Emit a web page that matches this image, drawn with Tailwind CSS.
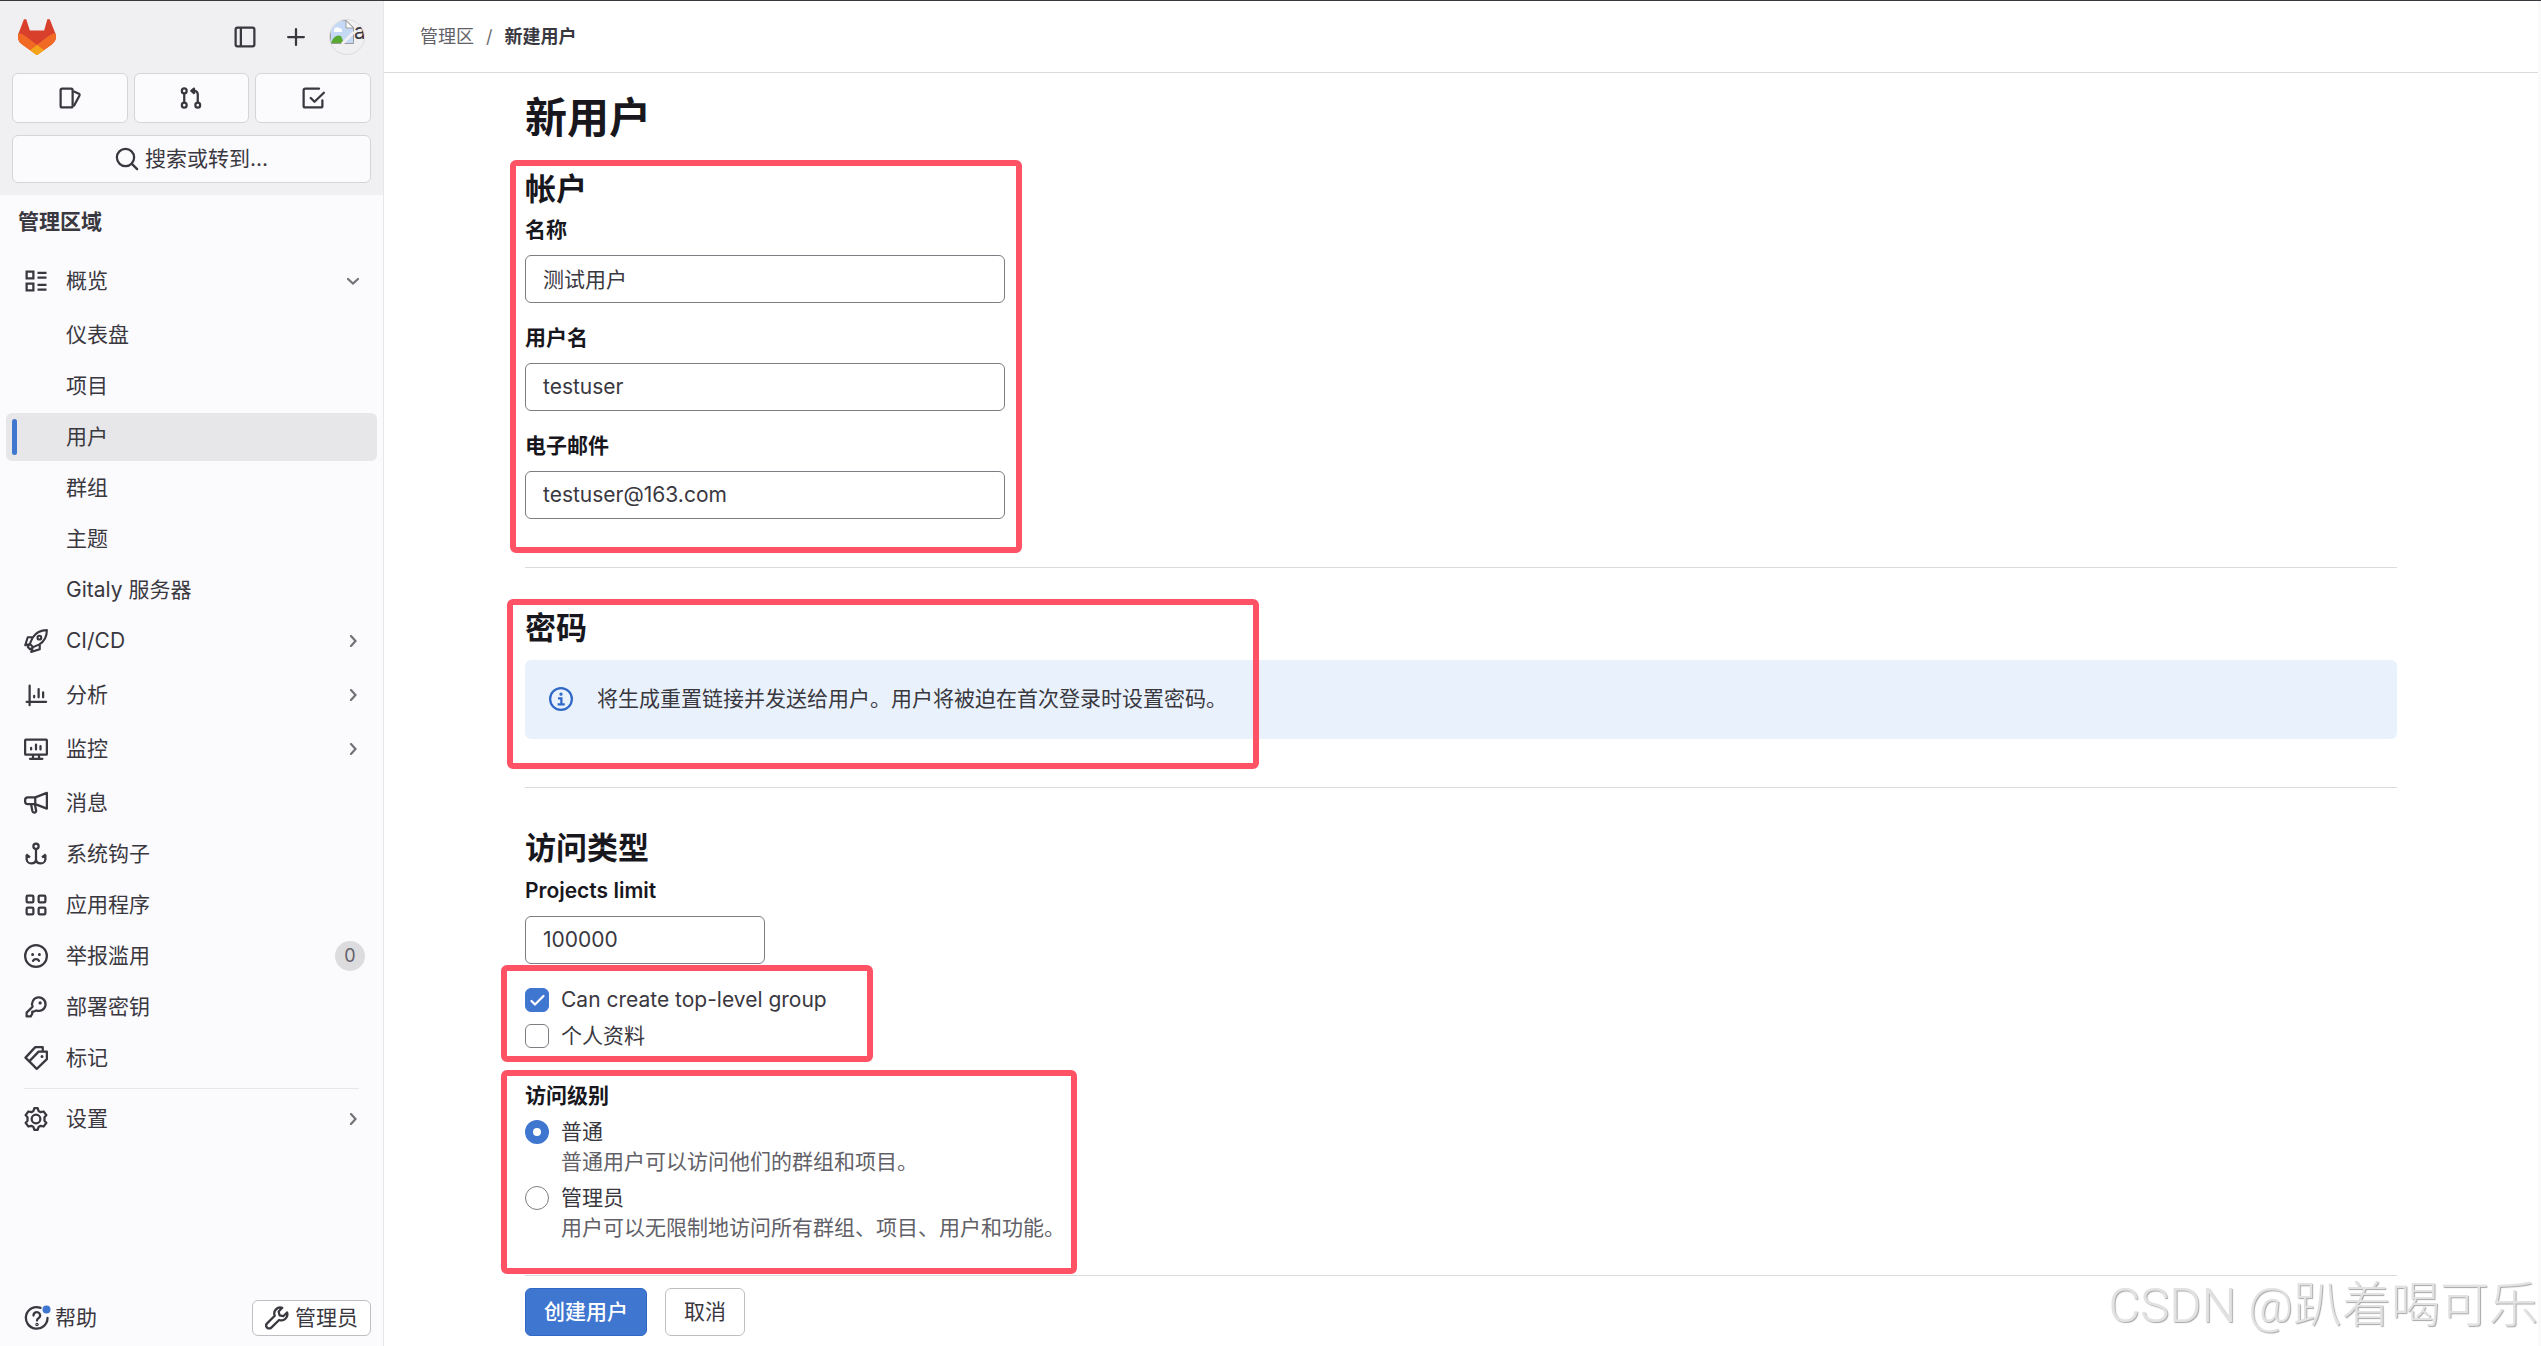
<!DOCTYPE html>
<html lang="zh-CN">
<head>
    <meta charset="UTF-8">
    <meta name="viewport" content="width=device-width, initial-scale=1.0">
    <title>新建用户 · 管理区 · GitLab</title>
    <script src="https://cdn.jsdelivr.net/npm/@tailwindcss/browser@4"></script>
</head>
<body class="min-h-screen flex border-t border-[#3a383f] bg-white font-['Inter','Noto_Sans_CJK_SC',sans-serif] text-[21px] leading-[30px] text-[#3a383f]">

    <!-- Sidebar -->
    <aside class="w-96 shrink-0 flex flex-col border-r border-[#e7e7ea] bg-[#fbfafd]">
        <div class="bg-[#f0eff2] px-3 pb-3 h-[194px]">
            <div class="flex items-center h-[72px] px-[6px]">
                <a href="#" aria-label="主页">
                    <svg class="w-[38px] h-9" viewBox="0 0 25 24" preserveAspectRatio="none">
                        <path fill="#d9402b" d="M24.507 9.500l-.034-.09L20.900.1h-1.600l-2.100 7.560H7.800L5.400.1H3.900L.451 9.411.416 9.500a6.297 6.297 0 002.090 7.278l.042.032 9.900 7.200 9.970-7.200A6.297 6.297 0 0024.507 9.500z"/>
                        <path fill="#f06a25" d="M24.507 9.5l-.034-.09a11.44 11.44 0 00-4.56 2.051l-7.447 5.632 4.742 3.584 5.197-3.89.014-.01A6.297 6.297 0 0024.507 9.5z"/>
                        <path fill="#f5a31a" d="M7.707 20.677l2.56 1.935 1.555 1.176a1.051 1.051 0 001.268 0l1.555-1.176 2.56-1.935-4.743-3.584-4.755 3.584z"/>
                        <path fill="#f06a25" d="M5.01 11.461a11.43 11.43 0 00-4.56-2.05L.416 9.5a6.297 6.297 0 002.09 7.278l.012.01.03.022 5.16 3.867 4.745-3.584-7.444-5.632z"/>
                    </svg>
                </a>
                <div class="ml-auto flex items-center">
                    <button type="button" aria-label="切换侧边栏" class="w-12 h-12 flex items-center justify-center">
                        <svg class="w-6 h-6" viewBox="0 0 16 16" fill="none" stroke="currentColor" stroke-width="1.5"><rect x="1.75" y="1.75" width="12.5" height="12.5" rx="1.25"/><path d="M5.25 2v12"/></svg>
                    </button>
                    <button type="button" aria-label="新建" class="w-[54px] h-12 flex items-center justify-center">
                        <svg class="w-6 h-6" viewBox="0 0 16 16" fill="none" stroke="currentColor" stroke-width="1.5" stroke-linecap="round"><path d="M8 2.75v10.5M2.75 8h10.5"/></svg>
                    </button>
                    <button type="button" aria-label="用户菜单" class="ml-[6px] w-9 h-9 rounded-full overflow-hidden border border-[#dcdcde] flex items-start">
                        <svg class="w-6 h-6 shrink-0" viewBox="0 0 24 24">
                            <path fill="#c5d9f7" stroke="#9a9a9a" d="M.5.5H16l7.500 7V23.500H.5z"/>
                            <path fill="#fff" d="M4 10a3 3 0 015-2 3 3 0 013 4H4z"/>
                            <path fill="#58a832" d="M1 23c2-6 6-9 10-7l3 7z"/>
                            <path fill="#fff" stroke="#9a9a9a" d="M16 .5V8h7.500z"/>
                            <path stroke="#f0eff2" stroke-width="3" d="M12 24L24 12"/>
                        </svg>
                        <span class="leading-[24px]">a</span>
                    </button>
                </div>
            </div>
            <div class="grid grid-cols-3 gap-[6px]">
                <a href="#" aria-label="议题" class="h-[50px] flex items-center justify-center rounded-md border border-[#d5d4d9] bg-[#fbfafd]">
                    <svg class="w-6 h-6" viewBox="0 0 16 16" fill="none" stroke="currentColor" stroke-width="1.5" stroke-linejoin="round"><rect x="1.750" y="1.750" width="8" height="12.500" rx="1"/><path d="M10.250 3.500l3.700 1.700c.4.200.6.600.4 1.100L10.500 13.500"/></svg>
                </a>
                <a href="#" aria-label="合并请求" class="h-[50px] flex items-center justify-center rounded-md border border-[#d5d4d9] bg-[#fbfafd]">
                    <svg class="w-6 h-6" viewBox="0 0 16 16" fill="none" stroke="currentColor" stroke-width="1.500" stroke-linecap="round" stroke-linejoin="round"><circle cx="3.500" cy="3.250" r="1.600"/><circle cx="3.500" cy="12.750" r="1.600"/><circle cx="12.500" cy="12.750" r="1.600"/><path d="M3.500 5v6M12.500 11V5.500a2.250 2.250 0 00-2.250-2.250H8.500"/><path d="M10 1.750L8.250 3.250 10 4.750z" fill="currentColor"/></svg>
                </a>
                <a href="#" aria-label="待办事项" class="h-[50px] flex items-center justify-center rounded-md border border-[#d5d4d9] bg-[#fbfafd]">
                    <svg class="w-6 h-6" viewBox="0 0 16 16" fill="none" stroke="currentColor" stroke-width="1.500" stroke-linecap="round" stroke-linejoin="round"><path d="M12 1.750H2.750a1 1 0 00-1 1v10.500a1 1 0 001 1h10.500a1 1 0 001-1V9.500M6.500 8L9 10.500l6.250-6"/></svg>
                </a>
            </div>
            <button type="button" class="mt-3 w-full h-12 flex items-center justify-center gap-[6px] rounded-md border border-[#d5d4d9] bg-[#fbfafd]">
                <svg class="w-6 h-6" viewBox="0 0 16 16" fill="none" stroke="currentColor" stroke-width="1.500" stroke-linecap="round"><circle cx="7" cy="7" r="5.750"/><path d="M11.250 11.250l3.500 3.500"/></svg>
                搜索或转到...
            </button>
        </div>

        <nav class="flex-1 px-[6px] pt-3">
            <h2 class="px-3 h-[50px] leading-[30px] font-semibold">管理区域</h2>
            <ul class="flex flex-col gap-[3px]">
                <li class="mb-[3px]">
                    <a href="#" class="h-12 flex items-center gap-[18px] px-[18px]">
                        <svg class="w-6 h-6" viewBox="0 0 16 16" fill="none" stroke="currentColor" stroke-width="1.500"><path d="M1.750 1.750h4.500v4.500h-4.500zM1.750 9.750h4.500v4.500h-4.500zM9 2.500h6M9 5.750h6M9 10.500h6M9 13.750h6"/></svg>
                        概览
                        <svg class="ml-auto w-3 h-3" viewBox="0 0 12 12" fill="none" stroke="#737278" stroke-width="2.200" stroke-linecap="round"><path d="M1 4l5 4.500L11 4"/></svg>
                    </a>
                </li>
                <li><a href="#" class="h-12 flex items-center pl-[60px]">仪表盘</a></li>
                <li><a href="#" class="h-12 flex items-center pl-[60px]">项目</a></li>
                <li><a href="#" aria-current="page" class="h-12 flex items-center gap-[49px] rounded-md bg-[#e7e7e9] pl-[6px]"><span class="w-[5px] h-9 rounded-full bg-[#3f76cf]"></span>用户</a></li>
                <li><a href="#" class="h-12 flex items-center pl-[60px]">群组</a></li>
                <li><a href="#" class="h-12 flex items-center pl-[60px]">主题</a></li>
                <li><a href="#" class="h-12 flex items-center pl-[60px]">Gitaly 服务器</a></li>
                <li class="mb-[3px]">
                    <a href="#" class="h-12 flex items-center gap-[18px] px-[18px]">
                        <svg class="w-6 h-6" viewBox="0 0 16 16" fill="none" stroke="currentColor" stroke-width="1.400" stroke-linejoin="round"><path d="M15.250.75c-4.500 0-7.250 1.500-9.500 5L3.900 9.900l2.200 2.200 4.150-1.850c3.500-2.250 5-5 5-9.500zM5.750 5.500H2.500L.8 10.800 4 10M10.500 10.250v3.250L4.800 15.250 6 12M3.900 9.900L2.500 12l1.500 1.500 2.100-1.400"/><circle cx="10.250" cy="5.750" r="1.250"/></svg>
                        CI/CD
                        <svg class="ml-auto w-3 h-3" viewBox="0 0 12 12" fill="none" stroke="#737278" stroke-width="2.200" stroke-linecap="round"><path d="M4 1l4.500 5L4 11"/></svg>
                    </a>
                </li>
                <li class="mb-[3px]">
                    <a href="#" class="h-12 flex items-center gap-[18px] px-[18px]">
                        <svg class="w-6 h-6" viewBox="0 0 16 16" fill="none" stroke="currentColor" stroke-width="1.500" stroke-linecap="round"><path d="M3.750 1.750v13M1.750 12.500h13M6.750 8.500v1M9.750 4v5.500M12.750 6.250V9.500"/></svg>
                        分析
                        <svg class="ml-auto w-3 h-3" viewBox="0 0 12 12" fill="none" stroke="#737278" stroke-width="2.200" stroke-linecap="round"><path d="M4 1l4.500 5L4 11"/></svg>
                    </a>
                </li>
                <li class="mb-[3px]">
                    <a href="#" class="h-12 flex items-center gap-[18px] px-[18px]">
                        <svg class="w-6 h-6" viewBox="0 0 16 16" fill="none" stroke="currentColor" stroke-width="1.500" stroke-linecap="round"><rect x=".75" y="1.750" width="14.500" height="10" rx=".5"/><path d="M4.750 7.250v1M8 5v3.250M11 6v2.250M6 12v2.500M10 12v2.500M4 14.500h8.250"/></svg>
                        监控
                        <svg class="ml-auto w-3 h-3" viewBox="0 0 12 12" fill="none" stroke="#737278" stroke-width="2.200" stroke-linecap="round"><path d="M4 1l4.500 5L4 11"/></svg>
                    </a>
                </li>
                <li>
                    <a href="#" class="h-12 flex items-center gap-[18px] px-[18px]">
                        <svg class="w-6 h-6" viewBox="0 0 16 16" fill="none" stroke="currentColor" stroke-width="1.500" stroke-linejoin="round"><path d="M7.500 4.250h-5a1.750 1.750 0 00-1.750 1.750v1A1.750 1.750 0 002.500 8.750h5l7.750 3V1.250zM7.500 4.250v4.500M4.750 9l.8 4.200c.4 1.800 2.900 1.500 2.500-.4L7.250 9"/></svg>
                        消息
                    </a>
                </li>
                <li>
                    <a href="#" class="h-12 flex items-center gap-[18px] px-[18px]">
                        <svg class="w-6 h-6" viewBox="0 0 16 16" fill="none" stroke="currentColor" stroke-width="1.500" stroke-linejoin="round"><circle cx="8" cy="2.750" r="1.750"/><path d="M8 4.500V14M1.750 8.500v2.750A3 3 0 004.750 14.250C6.500 14.250 8 13.500 8 11.500c0 2 1.500 2.750 3.250 2.750a3 3 0 003-3V8.500M1.500 8.250L4 10.250M14.500 8.250L12 10.250"/></svg>
                        系统钩子
                    </a>
                </li>
                <li>
                    <a href="#" class="h-12 flex items-center gap-[18px] px-[18px]">
                        <svg class="w-6 h-6" viewBox="0 0 16 16" fill="none" stroke="currentColor" stroke-width="1.500"><rect x="1.750" y="1.750" width="4.500" height="4.500" rx=".8"/><rect x="9.750" y="1.750" width="4.500" height="4.500" rx=".8"/><rect x="1.750" y="9.750" width="4.500" height="4.500" rx=".8"/><rect x="9.750" y="9.750" width="4.500" height="4.500" rx=".8"/></svg>
                        应用程序
                    </a>
                </li>
                <li>
                    <a href="#" class="h-12 flex items-center gap-[18px] pl-[18px] pr-3">
                        <svg class="w-6 h-6" viewBox="0 0 16 16" fill="none" stroke="currentColor" stroke-width="1.500" stroke-linecap="round"><circle cx="8" cy="8" r="7.250"/><path d="M6 11.250c.8-1.500 3.200-1.500 4 0"/><circle cx="5.750" cy="7" r=".5" stroke-width="1"/><circle cx="10.250" cy="7" r=".5" stroke-width="1"/></svg>
                        举报滥用
                        <span class="ml-auto w-[30px] h-[30px] rounded-full bg-[#dcdcde] text-center text-lg leading-[30px] text-[#626168]">0</span>
                    </a>
                </li>
                <li>
                    <a href="#" class="h-12 flex items-center gap-[18px] px-[18px]">
                        <svg class="w-6 h-6" viewBox="0 0 16 16" fill="none" stroke="currentColor" stroke-width="1.500" stroke-linejoin="round"><path d="M5.700 7.800A4.500 4.500 0 118.200 10.300L6.500 11H5.500v1.500L4.500 14.250H1.750v-2.500z"/><circle cx="10.750" cy="5.250" r=".6" stroke-width="1"/></svg>
                        部署密钥
                    </a>
                </li>
                <li>
                    <a href="#" class="h-12 flex items-center gap-[18px] px-[18px]">
                        <svg class="w-6 h-6" viewBox="0 0 16 16" fill="none" stroke="currentColor" stroke-width="1.500" stroke-linejoin="round"><path d="M3.500 10.250l6.250-6.500h5.500v5L8.500 15.250 1 7.750l6.500-7h5v3"/><circle cx="12" cy="7" r=".5" stroke-width="1"/></svg>
                        标记
                    </a>
                </li>
            </ul>
            <hr class="mx-[18px] my-[6px] border-[#e7e7ea]">
            <a href="#" class="h-12 flex items-center gap-[18px] px-[18px]">
                <svg class="w-6 h-6" viewBox="0 0 16 16" fill="none" stroke="currentColor" stroke-width="1.500" stroke-linejoin="round"><circle cx="8" cy="8" r="2.900"/><path d="M6.900.75h2.200l.6 1.900 1.400.8 1.950-.45 1.900 2.400-1.300 1.400v2.400l1.300 1.400-1.900 2.400-1.950-.45-1.400.8-.6 1.900H6.900l-.6-1.900-1.400-.8-1.950.45-1.900-2.400 1.300-1.400V6.800L1.050 5.400 2.950 3l1.950.45 1.400-.8z"/></svg>
                设置
                <svg class="ml-auto w-3 h-3" viewBox="0 0 12 12" fill="none" stroke="#737278" stroke-width="2.200" stroke-linecap="round"><path d="M4 1l4.500 5L4 11"/></svg>
            </a>
        </nav>

        <div class="flex items-center justify-between pl-6 pr-3 pb-[10px]">
            <button type="button" class="flex items-center gap-[3px]">
                <svg class="w-7 h-7" viewBox="0 0 28 28" fill="none" stroke="currentColor" stroke-width="2.300" stroke-linecap="round"><path d="M16.500 3.800A10.800 10.800 0 1023.500 14M9.500 11.500a3.300 3.300 0 116 1.800c-.9 1-2.500 1.300-2.500 3.200"/><circle cx="13" cy="20.500" r=".6"/><circle cx="22.500" cy="5.500" r="4" fill="#3f76cf" stroke="none"/></svg>
                帮助
            </button>
            <a href="#" class="h-9 px-3 flex items-center gap-[6px] rounded-md border border-[#bfbfc3] bg-white">
                <svg class="w-6 h-6" viewBox="0 0 16 16" fill="none" stroke="currentColor" stroke-width="1.500" stroke-linejoin="round"><path d="M11.500 1.200a4 4 0 00-5 5.300L1.400 11.600a1.900 1.900 0 002.800 2.800L9.400 9.300a4 4 0 005.300-5L12.200 6.800 9.700 6.200 9.100 3.700z"/></svg>
                管理员
            </a>
        </div>
    </aside>

    <!-- Main column -->
    <div class="relative flex-1 min-w-0 border-r-[3px] border-[#fafafa]">
        <header class="h-[72px] pt-px px-9 flex items-center border-b border-[#dcdcde]">
            <nav aria-label="面包屑" class="flex items-center gap-3 text-lg">
                <a href="#" class="text-[#626168]">管理区</a>
                <span class="text-[#737278]">/</span>
                <a href="#" class="font-semibold">新建用户</a>
            </nav>
        </header>

        <main class="max-w-[1920px] mx-auto px-6">
            <h1 class="pt-5 text-[42px] leading-[50px] font-semibold text-[#18171d]">新用户</h1>

            <form>
                <section class="relative pt-7 pb-12 border-b border-[#dcdcde]">
                    <div class="absolute -left-[15px] top-[17px] w-[512px] h-[393px] rounded-md border-[6px] border-[#ff5265] pointer-events-none"></div>
                    <h2 class="text-[31px] leading-9 font-semibold text-[#18171d]">帐户</h2>
                    <div class="flex flex-col gap-5 mt-2">
                        <div>
                            <label for="name" class="block mb-[10px] font-semibold text-[#18171d]">名称</label>
                            <input id="name" type="text" value="测试用户" class="block w-[480px] h-12 px-[17px] pb-[2px] rounded-md border border-[#7d7c82] bg-white">
                        </div>
                        <div>
                            <label for="username" class="block mb-[10px] font-semibold text-[#18171d]">用户名</label>
                            <input id="username" type="text" value="testuser" class="block w-[480px] h-12 px-[17px] pb-[2px] rounded-md border border-[#7d7c82] bg-white">
                        </div>
                        <div>
                            <label for="email" class="block mb-[10px] font-semibold text-[#18171d]">电子邮件</label>
                            <input id="email" type="text" value="testuser@163.com" class="block w-[480px] h-12 px-[17px] pb-[2px] rounded-md border border-[#7d7c82] bg-white">
                        </div>
                    </div>
                </section>

                <section class="relative pt-[42px] pb-12 border-b border-[#dcdcde]">
                    <div class="absolute -left-[18px] top-[31px] w-[752px] h-[170px] rounded-md border-[6px] border-[#ff5265] pointer-events-none"></div>
                    <h2 class="text-[31px] leading-9 font-semibold text-[#18171d]">密码</h2>
                    <div role="alert" class="mt-[14px] px-6 pt-6 pb-[25px] flex items-center gap-6 rounded-md bg-[#e9f2fc]">
                        <svg class="w-6 h-6" viewBox="0 0 16 16" fill="none" stroke="#3068c8" stroke-width="1.500"><circle cx="8" cy="8" r="7.250"/><path d="M6 7.500h2.250v4M5.750 11.500h4.750"/><circle cx="8" cy="4.750" r=".6" stroke-width="1"/></svg>
                        <p>将生成重置链接并发送给用户。用户将被迫在首次登录时设置密码。</p>
                    </div>
                </section>

                <section class="relative pt-[42px] pb-8 border-b border-[#dcdcde]">
                    <div class="absolute -left-6 top-[177px] w-[372px] h-[97px] rounded-md border-[6px] border-[#ff5265] pointer-events-none"></div>
                    <div class="absolute -left-6 top-[282px] w-[576px] h-[204px] rounded-md border-[6px] border-[#ff5265] pointer-events-none"></div>
                    <h2 class="text-[31px] leading-9 font-semibold text-[#18171d]">访问类型</h2>
                    <label for="limit" class="block my-[10px] font-semibold text-[#18171d]">Projects limit</label>
                    <input id="limit" type="text" value="100000" class="block w-60 h-12 px-[17px] pb-[2px] rounded-md border border-[#7d7c82] bg-white">

                    <div class="mt-[21px] flex flex-col gap-[6px]">
                        <label class="flex items-center gap-3">
                            <span class="relative flex">
                                <input type="checkbox" checked class="appearance-none w-6 h-6 rounded-md border border-[#7d7c82] checked:border-[#3f76cf] checked:bg-[#3f76cf]">
                                <svg class="absolute inset-0 w-6 h-6 pointer-events-none" viewBox="0 0 24 24" fill="none" stroke="#fff" stroke-width="2.200" stroke-linecap="round" stroke-linejoin="round"><path d="M6.500 13l3.500 3.500L18.500 8"/></svg>
                            </span>
                            Can create top-level group
                        </label>
                        <label class="flex items-center gap-3">
                            <input type="checkbox" class="appearance-none w-6 h-6 rounded-md border border-[#7d7c82]">
                            个人资料
                        </label>
                    </div>

                    <fieldset class="mt-[30px]">
                        <legend class="font-semibold text-[#18171d]">访问级别</legend>
                        <div class="mt-[6px] grid grid-cols-[24px_1fr] gap-x-3 items-center">
                            <input id="regular" type="radio" name="level" checked class="appearance-none w-6 h-6 rounded-full border border-[#7d7c82] checked:border-8 checked:border-[#3f76cf]">
                            <label for="regular">普通</label>
                            <p class="col-start-2 text-[#626168]">普通用户可以访问他们的群组和项目。</p>
                            <input id="admin" type="radio" name="level" class="mt-[6px] appearance-none w-6 h-6 rounded-full border border-[#7d7c82]">
                            <label for="admin" class="mt-[6px]">管理员</label>
                            <p class="col-start-2 text-[#626168]">用户可以无限制地访问所有群组、项目、用户和功能。</p>
                        </div>
                    </fieldset>
                </section>

                <div class="pt-3 pb-[10px] flex gap-[18px]">
                    <button type="submit" class="h-12 px-[18px] rounded-md bg-[#3f76cf] border border-[#3068c8] text-white font-medium">创建用户</button>
                    <button type="button" class="h-12 px-[18px] rounded-md bg-white border border-[#bfbfc3]">取消</button>
                </div>
            </form>
        </main>

        <div class="absolute right-0 bottom-[10px] font-['Roboto','Noto_Sans_CJK_SC',sans-serif] font-light text-[49px] leading-[60px] whitespace-nowrap text-[#e2e2e2] [text-shadow:1px_1px_1px_#a8a8a8]">CSDN @趴着喝可乐</div>
    </div>
</body>
</html>
